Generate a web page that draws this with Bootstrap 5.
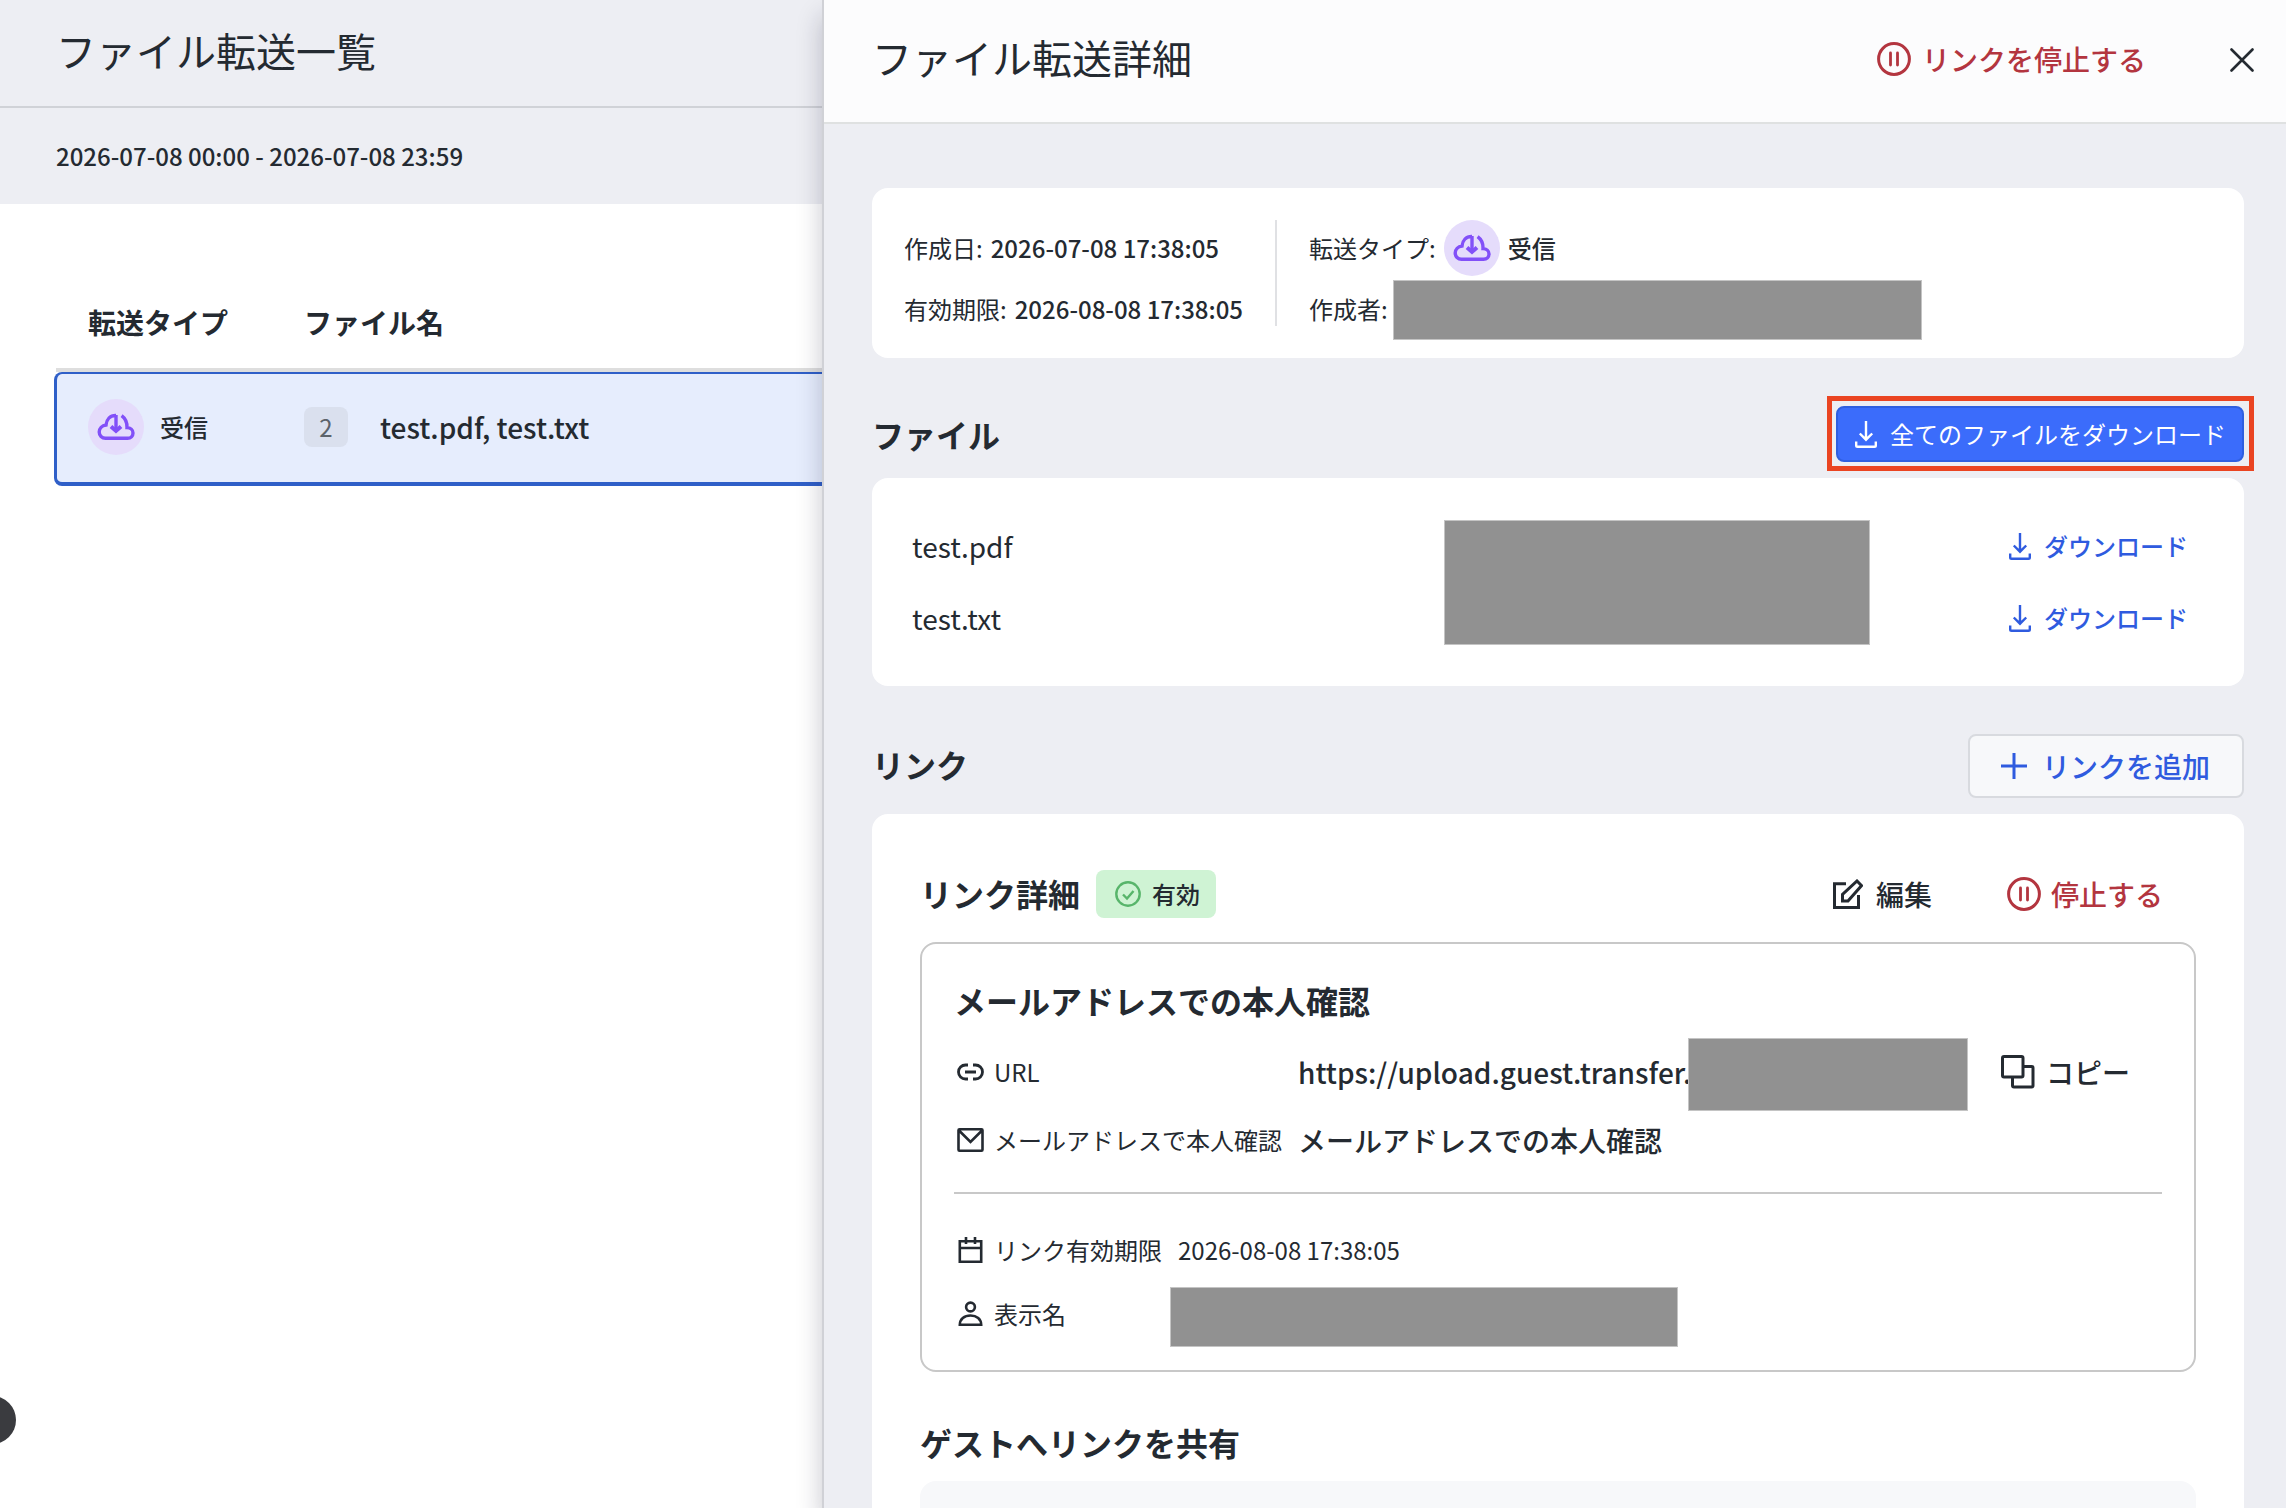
<!DOCTYPE html>
<html lang="ja">
<head>
  <meta charset="utf-8">
  <meta content="width=device-width, initial-scale=1.0" name="viewport">
  <title>ファイル転送一覧</title>
  <link href="https://cdn.jsdelivr.net/npm/bootstrap@5.3.3/dist/css/bootstrap.min.css" rel="stylesheet">
  <style>
    body {
      font-family: "Noto Sans CJK JP", "Noto Sans", sans-serif;
      font-size: 24px;
      line-height: 36px;
      color: #242a31;
      background-color: #fff;
      height: 1508px;
      overflow: hidden;
      white-space: nowrap;
    }
    svg {
      display: block;
      flex-shrink: 0;
      fill: none;
      stroke: currentColor;
      stroke-width: 3;
    }
    h1, h2, h3 {
      margin: 0;
      line-height: 48px;
    }
    h1 { font-size: 40px; font-weight: 400; }
    h2, h3 { font-size: 32px; font-weight: 700; }
    .fs-28 { font-size: 28px; }
    .fw-500 { font-weight: 500; }
    .text-link { color: #2f5bdf; }
    .text-stop { color: #b3353f; }
    .redacted { background-color: #919191; border: 1px solid #c4c4c4; flex-shrink: 0; }

    /* 一覧 */
    .list-pane { width: 822px; flex-shrink: 0; overflow: hidden; position: relative; }
    .list-title { height: 108px; padding: 0 0 6px 56px; background-color: #edeef3; border-bottom: 2px solid #d0d2d7; }
    .list-filter { height: 96px; padding: 0 0 0 56px; background-color: #edeef3; }
    .list-table { padding: 80px 0 0 54px; }
    .list-head { height: 84px; margin-left: 2px; padding: 0 0 8px 32px; font-size: 28px; font-weight: 700; }
    .list-rule { height: 4px; margin-left: 2px; background-color: #dedede; }
    .list-item {
      height: 114px;
      padding: 0 0 2px 31px;
      background-color: #e6edfd;
      border: 3px solid #2f5fc8;
      border-top-width: 2px;
      border-bottom-width: 4px;
      border-right: 0;
      border-radius: 8px 0 0 8px;
    }
    .col-type { width: 216px; }
    .type-icon { width: 56px; height: 56px; border-radius: 50%; background-color: #e5dcfb; color: #8250f8; flex-shrink: 0; }
    .count { width: 44px; height: 40px; border-radius: 8px; background-color: #dae0ee; color: #5c636b; }
    .bubble { position: absolute; left: -32px; top: 1396px; width: 48px; height: 48px; border-radius: 50%; background-color: #3a3b3f; }

    /* 詳細 */
    .detail-pane {
      position: relative;
      width: 1464px;
      height: 1508px;
      background-color: #edeef3;
      border-left: 2px solid #d0d1d6;
      box-shadow: 0 16px 24px rgba(20, 20, 50, .24);
    }
    .detail-head { height: 124px; padding: 0 32px 5px 48px; background-color: #fcfcfd; border-bottom: 2px solid #dfe1e1; }
    .detail-body { padding: 64px 42px 0 48px; }
    .panel { background-color: #fff; border-radius: 16px; }
    .summary { height: 170px; padding: 32px; }
    .summary-col { display: grid; grid-template-rows: 56px 36px; row-gap: 15px; }
    .summary-col + .summary-col { margin-left: 32px; padding-left: 32px; border-left: 2px solid #e0e1e4; }
    .files-head { height: 56px; margin: 48px 0 16px; }
    .btn-all {
      height: 56px;
      padding: 0 16px 0 17px;
      color: #fff;
      font-size: 24px;
      background-color: #3b6cfb;
      border: 2px solid #2f5fe0;
      border-radius: 8px;
    }
    .highlight { position: absolute; left: -9px; top: -10px; width: 427px; height: 75px; border: 5px solid #ea4421; }
    .files { height: 208px; padding: 32px 40px; }
    .file-row { height: 72px; }
    .link-head { height: 64px; margin: 48px 0 16px; }
    .btn-add {
      width: 276px;
      height: 64px;
      padding: 0 31px;
      color: #2f5bdf;
      font-size: 28px;
      background-color: #f7f8fa;
      border: 2px solid #d8dadf;
      border-radius: 8px;
    }
    .links { height: 720px; padding: 56px 48px 0; }
    .state { width: 120px; height: 48px; padding-left: 19px; margin-left: 16px; background-color: #cff3d4; border-radius: 8px; }
    .link-card { height: 430px; margin-top: 24px; padding: 32px 32px 0 34px; border: 2px solid #c8c8c8; border-radius: 16px; }
    .link-card h3 { margin-left: -2px; }
    .prop { height: 68px; }
    .prop-label { gap: 10px; padding-left: 1px; }
    .w-wide { width: 342px; }
    .w-narrow { width: 222px; }
    .divider { height: 2px; margin-left: -2px; background-color: #c8c8c8; }
    .share-box { height: 100px; margin-top: 15px; background-color: #f7f8fa; border-radius: 16px; }
  </style>
</head>
<body class="d-flex">
  <!-- アイコン -->
  <svg class="d-none">
    <symbol id="cloud" viewBox="0 0 56 56">
      <path d="M28 16.5C22 16.3 18.5 20.5 18 26C14 26.5 11.2 29.5 11.2 33C11.2 36.5 14 39.3 17.5 39.3H39.5C42.8 39.3 45 36.9 45 33.9C45 31 42.5 28.6 39 28.6C39.2 24 37.6 19.5 33.6 16.6" stroke-width="3.400"/>
      <path d="M28 16v16" stroke-width="3.400"/><path d="M23 27.500l5 4.400 5-4.400" stroke-width="4"/>
    </symbol>
    <symbol id="pause" viewBox="0 0 34 34">
      <circle cx="17" cy="17" r="15.4"/><path d="M13.5 11v12M20.5 11v12" stroke-linecap="round" stroke-width="2.8"/>
    </symbol>
    <symbol id="download" viewBox="0 0 22 28">
      <path d="M11 1v19M4.8 13.5L11 19.7l6.2-6.2M1.2 21.500v4q0 1.300 1.300 1.300h17q1.300 0 1.300-1.300v-4" stroke-width="2.400"/>
    </symbol>
  </svg>

  <section class="list-pane">
    <header class="list-title d-flex align-items-center"><h1>ファイル転送一覧</h1></header>
    <div class="list-filter d-flex align-items-center fw-500">2026-07-08 00:00 - 2026-07-08 23:59</div>
    <div class="list-table">
      <div class="list-head d-flex align-items-center">
        <div class="col-type">転送タイプ</div>
        <div>ファイル名</div>
      </div>
      <div class="list-rule"></div>
      <div class="list-item d-flex align-items-center">
        <div class="col-type d-flex align-items-center gap-3 fw-500">
          <div class="type-icon"><svg width="56" height="56"><use href="#cloud"/></svg></div>
          受信
        </div>
        <div class="count d-flex align-items-center justify-content-center">2</div>
        <div class="fs-28 fw-500 ms-4 ps-2">test.pdf, test.txt</div>
      </div>
    </div>
    <div class="bubble"></div>
  </section>

  <aside class="detail-pane">
    <header class="detail-head d-flex align-items-center">
      <h1 class="pb-1">ファイル転送詳細</h1>
      <a class="d-flex align-items-center ms-auto text-decoration-none text-stop fs-28 fw-500">
        <svg width="34" height="34" style="margin-right:11px"><use href="#pause"/></svg>リンクを停止する
      </a>
      <svg width="24" height="24" style="margin:2px 0 0 84px" stroke-linecap="round"><path d="M1.500 1.500l21 21M22.500 1.500l-21 21" stroke-width="2.600"/></svg>
    </header>

    <div class="detail-body">
      <div class="panel summary d-flex">
        <div class="summary-col">
          <div class="d-flex align-items-center gap-2">作成日: <span class="fw-500">2026-07-08 17:38:05</span></div>
          <div class="d-flex align-items-center gap-2">有効期限: <span class="fw-500">2026-08-08 17:38:05</span></div>
        </div>
        <div class="summary-col">
          <div class="d-flex align-items-center gap-2">転送タイプ:
            <div class="type-icon"><svg width="56" height="56"><use href="#cloud"/></svg></div>
            <span class="fw-500">受信</span>
          </div>
          <div class="d-flex align-items-center">作成者:<div class="redacted" style="width:529px;height:60px;margin:2px 0 0 5px"></div></div>
        </div>
      </div>

      <div class="files-head d-flex align-items-center justify-content-between">
        <h2>ファイル</h2>
        <div class="position-relative">
          <button class="btn btn-all d-flex align-items-center">
            <svg width="22" height="28" class="me-2"><use href="#download"/></svg><span style="padding-left:5px">全てのファイルをダウンロード</span>
          </button>
          <div class="highlight"></div>
        </div>
      </div>

      <div class="panel files d-flex align-items-center">
        <div class="fs-28" style="width:532px">
          <div class="file-row d-flex align-items-center">test.pdf</div>
          <div class="file-row d-flex align-items-center">test.txt</div>
        </div>
        <div class="redacted" style="width:426px;height:125px;margin-top:1px"></div>
        <div class="text-link fw-500" style="margin-left:139px">
          <div class="file-row d-flex align-items-center"><svg width="22" height="28" class="me-2"><use href="#download"/></svg><span style="padding-left:5px">ダウンロード</span></div>
          <div class="file-row d-flex align-items-center"><svg width="22" height="28" class="me-2"><use href="#download"/></svg><span style="padding-left:5px">ダウンロード</span></div>
        </div>
      </div>

      <div class="link-head d-flex align-items-center justify-content-between">
        <h2 class="pb-1">リンク</h2>
        <button class="btn btn-add d-flex align-items-center fw-500">
          <svg width="26" height="26" style="margin-right:15px"><path d="M13 0v26M0 13h26"/></svg>リンクを追加
        </button>
      </div>

      <div class="panel links">
        <div class="d-flex align-items-center" style="height:48px">
          <h3 style="padding-bottom:2px">リンク詳細</h3>
          <div class="state d-flex align-items-center fw-500">
            <svg width="26" height="26" style="margin-right:11px;color:#58b56b"><circle cx="13" cy="13" r="11.700" stroke-width="2.400"/><path d="M8 13.500l4 4 6.500-7.500" stroke-width="2.400"/></svg>有効
          </div>
          <div class="d-flex align-items-center ms-auto fs-28 fw-500">
            <svg width="30" height="30" style="margin-right:13px"><path d="M13 4.800H1.500v23.700h24V16M9.500 22v-6.500L24 2l4.600 4.600L15 22z"/></svg>編集
          </div>
          <div class="d-flex align-items-center fs-28 fw-500 text-stop" style="margin:0 33px 0 75px">
            <svg width="34" height="34" style="margin-right:10px"><use href="#pause"/></svg>停止する
          </div>
        </div>

        <div class="link-card">
          <h3>メールアドレスでの本人確認</h3>
          <div class="prop d-flex align-items-center" style="margin-top:14px">
            <div class="prop-label d-flex align-items-center w-wide">
              <svg width="27" height="18"><path d="M11 2H8.500a7 7 0 0 0 0 14H11M16 2h2.500a7 7 0 0 1 0 14H16M8 9h11" stroke-width="2.800"/></svg>URL
            </div>
            <div class="fs-28 fw-500" style="width:390px">https://upload.guest.transfer.</div>
            <div class="redacted" style="width:280px;height:73px;margin-top:5px"></div>
            <div class="d-flex align-items-center fs-28 fw-500" style="margin-left:33px">
              <svg width="34" height="34" style="margin-right:11px"><rect x="1.500" y="1.500" width="20.500" height="20.500" rx="1.500"/><path d="M22 11.500h8.500q1.500 0 1.500 1.500v17.500q0 1.500-1.500 1.500H13q-1.500 0-1.500-1.500V22"/></svg>コピー
            </div>
          </div>
          <div class="prop d-flex align-items-center">
            <div class="prop-label d-flex align-items-center w-wide">
              <svg width="27" height="24"><path d="M2.500 1.300h22q1 0 1 1v19.400q0 1-1 1h-22q-1 0-1-1V2.300q0-1 1-1zM2 2.500L13.500 14 25 2.500" stroke-width="2.600"/></svg>メールアドレスで本人確認
            </div>
            <div class="fs-28 fw-500">メールアドレスでの本人確認</div>
          </div>
          <div class="divider" style="margin-top:18px"></div>
          <div class="d-flex align-items-center" style="height:64px;margin-top:24px">
            <div class="prop-label d-flex align-items-center w-narrow">
              <svg width="27" height="26"><path d="M2.800 4.300h21.400v20.400H2.800zM2.800 11h21.400M9 0v7M18 0v7" stroke-width="2.600"/></svg>リンク有効期限
            </div>
            <div>2026-08-08 17:38:05</div>
          </div>
          <div class="d-flex align-items-center" style="height:64px">
            <div class="prop-label d-flex align-items-center" style="width:214px">
              <svg width="27" height="26"><circle cx="13.500" cy="6" r="4.400" stroke-width="2.600"/><path d="M2.800 23.700c0-5.500 4.500-9.200 10.700-9.200s10.700 3.700 10.700 9.200z" stroke-width="2.600"/></svg>表示名
            </div>
            <div class="redacted" style="width:508px;height:60px;margin-top:5px"></div>
          </div>
        </div>

        <h3 style="margin-top:46px">ゲストへリンクを共有</h3>
        <div class="share-box"></div>
      </div>
    </div>
  </aside>
  <script src="https://cdn.jsdelivr.net/npm/bootstrap@5.3.3/dist/js/bootstrap.bundle.min.js"></script>
</body>
</html>
